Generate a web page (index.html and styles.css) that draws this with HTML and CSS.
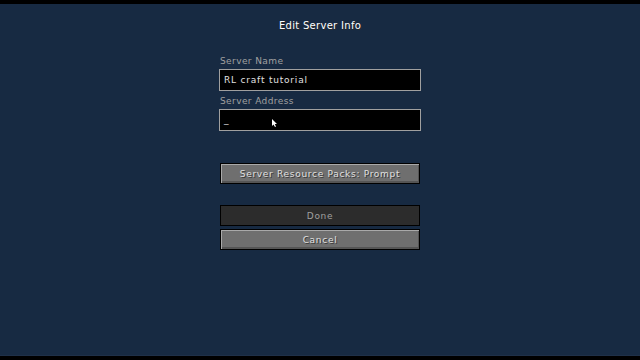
FILE: index.html
```html
<!DOCTYPE html>
<html lang="en">
<head>
  <meta charset="UTF-8" />
  <title>Edit Server Info</title>
  <link rel="stylesheet" href="styles.css">
</head>
<body>
  <div class="screen">
    <h1 class="title">Edit Server Info</h1>

    <div class="form">
      <div class="label">Server Name</div>
      <div class="field">RL craft tutorial</div>

      <div class="label">Server Address</div>
      <div class="field">
        <span class="caret">_</span>
        <svg class="pointer" width="5" height="8" viewBox="0 0 5 8">
          <path d="M0 0 L0 7 L1.5 5.5 L3 8 L4 7.5 L2.8 5 L5 5 Z" fill="#fff"/>
        </svg>
      </div>

      <button class="btn packs">Server Resource Packs: Prompt</button>
      <button class="btn done" disabled>Done</button>
      <button class="btn cancel">Cancel</button>
    </div>
  </div>
</body>
</html>
```

FILE: styles.css
```css
* { margin: 0; padding: 0; box-sizing: border-box; }

body {
  background: #000;
  font-family: "DejaVu Sans", sans-serif;
  font-size: 9px;
  width: 640px;
  height: 360px;
  overflow: hidden;
}

.screen {
  margin-top: 4px;
  height: 352px;
  background: #172a42;
  border-bottom: 1px solid #1f3048;
  display: flex;
  flex-direction: column;
  align-items: center;
  padding-top: 16px;
}

.title {
  font-size: 10px;
  font-weight: normal;
  line-height: 12px;
  color: #fff;
  text-shadow: 1px 1px 0 #2a2a2a;
  letter-spacing: 0.3px;
}

.form {
  width: 202px;
  display: flex;
  flex-direction: column;
  margin-top: 23px;
}

.label {
  color: #a0a0a0;
  line-height: 12px;
  padding-left: 1px;
  letter-spacing: 0.4px;
}

.label + .field { margin-top: 2px; }
.field + .label { margin-top: 4px; }

.field {
  position: relative;
  height: 22px;
  background: #000;
  border: 1px solid #a0a0a0;
  color: #e0e0e0;
  line-height: 20px;
  padding-left: 4px;
  letter-spacing: 0.8px;
}

.caret { color: #e0e0e0; }

.pointer {
  position: absolute;
  left: 52px;
  top: 9px;
}

.btn {
  margin: 0 1px;
  height: 21px;
  font-family: inherit;
  font-size: 9px;
  color: #e0e0e0;
  text-shadow: 1px 1px 0 #383838;
  background: #6f6f6f;
  border: 1px solid #000;
  box-shadow: inset 1px 1px 0 #a9a9a9, inset -1px -2px 0 #555;
  letter-spacing: 0.7px;
}

.packs { margin-top: 32px; }

.done {
  margin-top: 21px;
  background: #2c2c2c;
  color: #a0a0a0;
  text-shadow: none;
  box-shadow: none;
}

.cancel { margin-top: 3px; }
```
